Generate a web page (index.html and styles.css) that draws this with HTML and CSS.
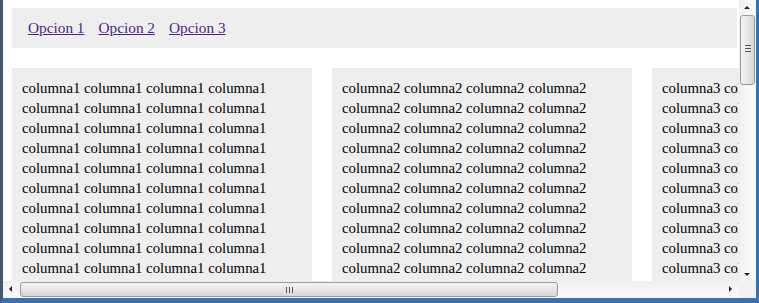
FILE: index.html
```html
<!DOCTYPE html>
<html lang="es">

<head>
  <meta charset="UTF-8">
  <title>Columnas</title>
  <link rel="stylesheet" href="styles.css">
</head>

<body>
  <div class="window">
    <div class="viewport">
      <div class="page">
        <nav class="menu">
          <a href="#">Opcion 1</a>
          <a href="#">Opcion 2</a>
          <a href="#">Opcion 3</a>
        </nav>

        <div class="columns">
          <div class="column" id="col1"></div>
          <div class="column" id="col2"></div>
          <div class="column" id="col3"></div>
        </div>
      </div>
    </div>

    <!-- barra vertical -->
    <div class="vscroll">
      <span class="arrow up"></span>
      <div class="vthumb"><span class="grip"></span></div>
      <span class="arrow down"></span>
    </div>

    <!-- barra horizontal -->
    <div class="hscroll">
      <span class="arrow left"></span>
      <div class="hthumb"><span class="grip"></span></div>
      <span class="arrow right"></span>
    </div>
    <div class="corner"></div>
  </div>

  <script>
    // Rellenar las columnas con el texto repetido
    function fillColumn(id, word) {
      const line = [word, word, word, word].join(' ');
      let html = '';
      for (let i = 0; i < 12; i++) {
        html += line + ' ';
      }
      document.getElementById(id).textContent = html;
    }

    fillColumn('col1', 'columna1');
    fillColumn('col2', 'columna2');
    fillColumn('col3', 'columna3');
  </script>
</body>

</html>
```

FILE: styles.css
```css
body {
  margin: 0;
  padding: 0;
  background-color: #3a6ea5;
}

.window {
  width: 759px;
  height: 303px;
  box-sizing: border-box;
  border-left: 3px solid #3e5a78;
  border-right: 3px solid #3d6fae;
  border-bottom: 5px solid #3d6fae;
  display: grid;
  grid-template-columns: 736px 17px;
  grid-template-rows: 281px 17px;
  background-color: #ffffff;
}

.viewport {
  overflow: hidden;
  background-color: #ffffff;
}

.page {
  padding: 8px 0 0 9px;
  font-family: "Liberation Serif", "Times New Roman", serif;
  font-size: 14.8px;
  line-height: 20px;
  color: #000000;
}

.menu {
  width: 725px;
  height: 40px;
  background-color: #eeeeee;
  display: flex;
  align-items: center;
  gap: 14px;
  padding-left: 16px;
  box-sizing: border-box;
  font-size: 15.3px;
}

.menu a {
  color: #4b1f86;
}

.columns {
  display: flex;
  gap: 20px;
  margin-top: 20px;
  width: 1000px;
}

.column {
  flex: 0 0 300px;
  box-sizing: border-box;
  padding: 10px 10px;
  background-color: #eeeeee;
  height: 260px;
}

/* barras de desplazamiento */
.vscroll {
  position: relative;
  background: linear-gradient(to right, #f0f0f0, #fbfbfb);
}

.hscroll {
  position: relative;
  background: linear-gradient(to bottom, #f0f0f0, #fbfbfb);
}

.corner {
  background-color: #f2f2f2;
}

.vthumb {
  position: absolute;
  left: 1px;
  right: 1px;
  top: 15px;
  height: 70px;
  border: 1px solid #9a9a9a;
  border-radius: 3px;
  background: linear-gradient(to right, #f4f4f4, #e6e6e6 50%, #d6d6d6);
  box-sizing: border-box;
}

.hthumb {
  position: absolute;
  top: 1px;
  bottom: 1px;
  left: 17px;
  width: 538px;
  border: 1px solid #9a9a9a;
  border-radius: 3px;
  background: linear-gradient(to bottom, #f4f4f4, #e6e6e6 50%, #d6d6d6);
  box-sizing: border-box;
}

.vthumb .grip {
  position: absolute;
  left: 4px;
  top: 29px;
  width: 6px;
  height: 5px;
  border-top: 1px solid #555555;
  border-bottom: 1px solid #555555;
  background: linear-gradient(to bottom, transparent 2px, #555555 2px, #555555 3px, transparent 3px);
}

.hthumb .grip {
  position: absolute;
  top: 4px;
  left: 265px;
  width: 5px;
  height: 6px;
  border-left: 1px solid #555555;
  border-right: 1px solid #555555;
  background: linear-gradient(to right, transparent 2px, #555555 2px, #555555 3px, transparent 3px);
}

.arrow {
  position: absolute;
  width: 0;
  height: 0;
  border: 3px solid transparent;
}

.arrow.up {
  left: 5px;
  top: 3px;
  border-bottom: 3px solid #222222;
}

.arrow.down {
  left: 5px;
  bottom: 2px;
  border-top: 3px solid #222222;
}

.arrow.left {
  left: 3px;
  top: 5px;
  border-right: 3px solid #222222;
}

.arrow.right {
  right: 4px;
  top: 5px;
  border-left: 3px solid #222222;
}
```
